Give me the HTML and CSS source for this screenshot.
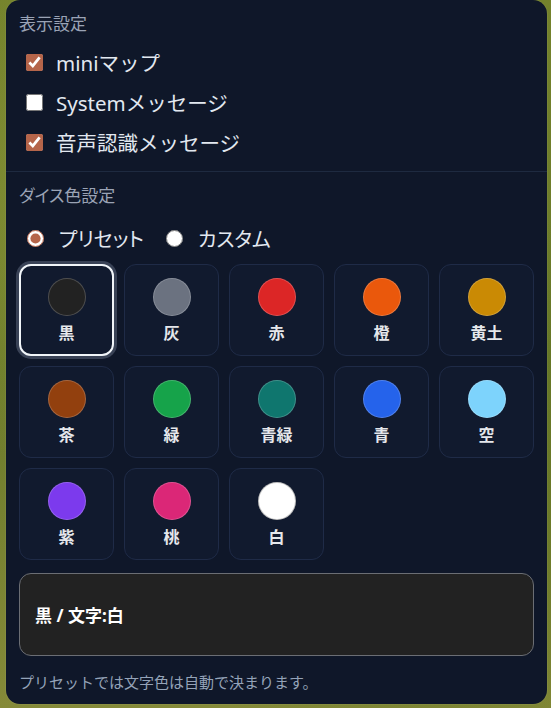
FILE: index.html
```html
<!DOCTYPE html>
<html lang="ja">
<head>
<meta charset="utf-8">
<title>表示設定</title>
<link rel="stylesheet" href="styles.css">
</head>
<body>
<div class="panel">
  <section class="sec sec-display">
    <div class="sec-title">表示設定</div>
    <label class="check-row"><input type="checkbox" checked><span>miniマップ</span></label>
    <label class="check-row"><input type="checkbox"><span>Systemメッセージ</span></label>
    <label class="check-row"><input type="checkbox" checked><span>音声認識メッセージ</span></label>
  </section>
  <section class="sec sec-dice">
    <div class="sec-title">ダイス色設定</div>
    <div class="radio-row">
      <label class="radio"><input type="radio" name="mode" checked><span>プリセット</span></label>
      <label class="radio"><input type="radio" name="mode"><span>カスタム</span></label>
    </div>
    <div class="swatch-grid">
      <button class="swatch selected"><span class="dot" style="--c:#222222"></span><span class="swatch-label">黒</span></button>
      <button class="swatch"><span class="dot" style="--c:#6b7280"></span><span class="swatch-label">灰</span></button>
      <button class="swatch"><span class="dot" style="--c:#dc2626"></span><span class="swatch-label">赤</span></button>
      <button class="swatch"><span class="dot" style="--c:#ea580c"></span><span class="swatch-label">橙</span></button>
      <button class="swatch"><span class="dot" style="--c:#ca8a04"></span><span class="swatch-label">黄土</span></button>
      <button class="swatch"><span class="dot" style="--c:#92400e"></span><span class="swatch-label">茶</span></button>
      <button class="swatch"><span class="dot" style="--c:#16a34a"></span><span class="swatch-label">緑</span></button>
      <button class="swatch"><span class="dot" style="--c:#0f766e"></span><span class="swatch-label">青緑</span></button>
      <button class="swatch"><span class="dot" style="--c:#2563eb"></span><span class="swatch-label">青</span></button>
      <button class="swatch"><span class="dot" style="--c:#7dd3fc"></span><span class="swatch-label">空</span></button>
      <button class="swatch"><span class="dot" style="--c:#7c3aed"></span><span class="swatch-label">紫</span></button>
      <button class="swatch"><span class="dot" style="--c:#db2777"></span><span class="swatch-label">桃</span></button>
      <button class="swatch"><span class="dot dot-white" style="--c:#ffffff"></span><span class="swatch-label">白</span></button>
    </div>
    <div class="preview">黒 / 文字:白</div>
    <p class="note">プリセットでは文字色は自動で決まります。</p>
  </section>
</div>
</body>
</html>
```

FILE: styles.css
```css
* { box-sizing: border-box; }

html, body {
  margin: 0;
  padding: 0;
}

body {
  width: 551px;
  height: 708px;
  overflow: hidden;
  font-family: "Noto Sans", "Noto Sans CJK JP", sans-serif;
  background:
    radial-gradient(circle at 20% 30%, rgba(150, 160, 60, 0.6), transparent 40%),
    radial-gradient(circle at 80% 70%, rgba(90, 110, 30, 0.6), transparent 45%),
    linear-gradient(180deg, #74822c 0%, #6a7a2a 50%, #858a38 100%);
}

.panel {
  margin-left: 6px;
  width: 541px;
  height: 704px;
  background: #0f1729;
  border-radius: 14px;
  box-shadow: 0 0 0 1px rgba(255, 255, 255, 0.05);
  overflow: hidden;
  color: #e2e8f0;
}

.sec {
  padding: 0 13px;
}

.sec-display {
  padding-top: 14px;
  padding-bottom: 9px;
  border-bottom: 1px solid #1e2a40;
}

.sec-dice {
  padding-top: 14px;
  padding-bottom: 12px;
}

.sec-title {
  font-size: 17px;
  line-height: 20px;
  color: #9aa3b5;
  font-feature-settings: "palt";
}

.check-row {
  display: flex;
  align-items: center;
  height: 40px;
  font-size: 20.5px;
  color: #e2e8f0;
}

.sec-title + .check-row {
  margin-top: 8px;
}

.check-row input {
  width: 17px;
  height: 17px;
  margin: 0 13px 0 7px;
  accent-color: #b5654a;
}

.radio-row {
  display: flex;
  align-items: center;
  height: 40px;
  margin-top: 12px;
  font-size: 20px;
  font-feature-settings: "palt";
}

.radio {
  display: flex;
  align-items: center;
  margin-right: 22px;
}

.radio input {
  width: 17px;
  height: 17px;
  margin: 0 15px 0 8px;
  accent-color: #b5654a;
}

.radio + .radio input {
  margin-left: 0;
}

.swatch-grid {
  display: grid;
  grid-template-columns: repeat(5, 1fr);
  gap: 10px;
  margin-top: 6px;
}

.swatch {
  height: 92px;
  display: flex;
  flex-direction: column;
  align-items: center;
  justify-content: center;
  gap: 7px;
  padding: 0;
  background: #111a2e;
  border: 1px solid #1f2b47;
  border-radius: 12px;
  font-family: inherit;
  cursor: pointer;
}

.swatch.selected {
  border: 2px solid #f1f5f9;
  box-shadow: 0 0 0 3px #394256;
}

.dot {
  width: 38px;
  height: 38px;
  border-radius: 50%;
  background: var(--c);
  border: 1.5px solid rgba(255, 255, 255, 0.2);
}

.dot-white {
  border-color: rgba(0, 0, 0, 0.25);
}

.swatch-label {
  font-size: 16px;
  line-height: 20px;
  font-weight: 700;
  color: #e5e7eb;
}

.preview {
  margin-top: 13px;
  height: 83px;
  display: flex;
  align-items: center;
  padding: 0 15px;
  background: #222222;
  border: 1px solid #6b6e74;
  border-radius: 12px;
  color: #ffffff;
  font-size: 17px;
  font-weight: 700;
}

.note {
  margin: 16px 0 0;
  font-size: 15px;
  line-height: 20px;
  color: #94a3b8;
}
```
